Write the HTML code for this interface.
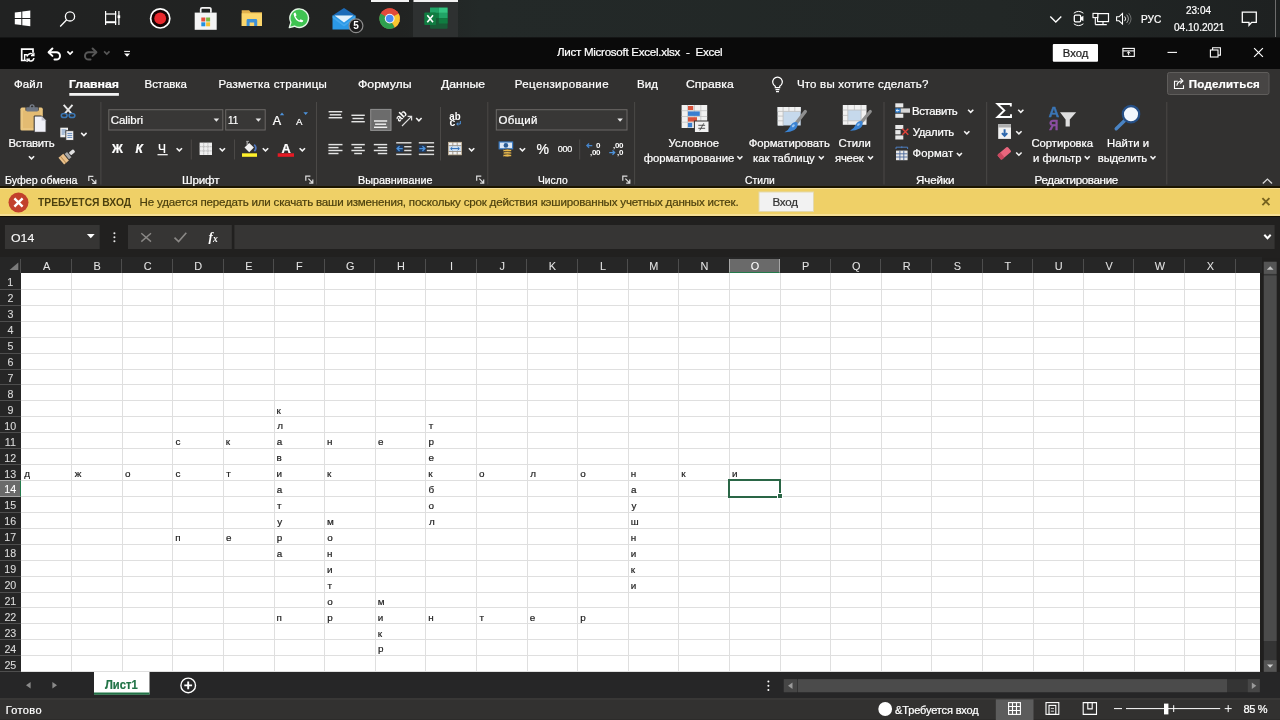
<!DOCTYPE html>
<html><head><meta charset="utf-8"><title>Excel</title>
<style>
*{box-sizing:border-box;margin:0;padding:0}
html,body{width:1280px;height:720px;overflow:hidden;background:#201f1e;font-family:"Liberation Sans",sans-serif;color:#fff}
body{position:relative}
#taskbar{position:absolute;left:0;top:0;width:1280px;height:38px;background:linear-gradient(90deg,#212222 0,#212322 400px,#232928 480px,#222726 1000px,#1e2121 1280px);border-bottom:1px solid #141515}
#titlebar{position:absolute;left:0;top:38px;width:1280px;height:31px;background:#0a0a0a}
#tabs{position:absolute;left:0;top:69px;width:1280px;height:29px;background:#323130}
#ribbon{position:absolute;left:0;top:98px;width:1280px;height:88px;background:#323130}
#msgbar{position:absolute;left:0;top:186px;width:1280px;height:31px;background:linear-gradient(180deg,#1c1500 0,#1c1500 1.5px,#f6e09a 1.5px,#f6e09a 2.8px,#efd067 2.8px,#efd067 28px,#f5de93 28px,#f5de93 29.5px,#150f00 29.5px,#150f00 31px)}
#fbar{position:absolute;left:0;top:217px;width:1280px;height:41px;background:#21201f}
#colhdr{position:absolute;left:0;width:1262px;background:#262626}
#rowhdr{position:absolute;left:0;background:#262626;overflow:hidden}
#grid{position:absolute;background:#fff;overflow:hidden}
#sheetbar{position:absolute;left:0;top:672.2px;width:1280px;height:26px;background:#262627}
#status{position:absolute;left:0;top:697.8px;width:1280px;height:22.2px;background:#323130;border-top:2px solid #383736;border-bottom:1px solid #2c2b2a}
#ov{position:absolute;left:0;top:0;will-change:transform}
#grid,#colhdr,#rowhdr{will-change:transform}
#texts{position:absolute;left:0;top:0;width:0;height:0;will-change:transform}
.t{position:absolute;white-space:pre;line-height:1;-webkit-text-stroke:.24px}
.cs{position:absolute;top:1.5px;width:1px;bottom:0;background:#4d4d4d}
.corner{position:absolute;left:0;top:0}
.vl{position:absolute;top:0;width:1px;height:100%;background:#dfdfdf}
.hl{position:absolute;left:0;height:1px;width:100%;background:#dfdfdf}
.selbox{position:absolute;border:2px solid #2a6646;box-sizing:content-box}
.handle{position:absolute;width:6px;height:6px;background:#2a6646;border:1px solid #fff;box-sizing:border-box}
.chsel{position:absolute;top:1.5px;bottom:0;background:#6a6a6a;border-bottom:1.5px solid #24794b;border-left:1px solid #a6a6a6;border-right:1px solid #a6a6a6}
.rs{position:absolute;left:0;width:100%;height:1px;background:#4e4e4e}
.rhsel{position:absolute;left:0;width:100%;background:#6a6a6a;border-right:1.5px solid #24794b;border-top:1px solid #a6a6a6;border-bottom:1px solid #a6a6a6}

</style></head><body>
<div id="taskbar"></div>
<div id="titlebar"></div>
<div id="tabs"></div>
<div id="ribbon">
</div>
<div id="msgbar">
</div>
<div id="fbar">
</div>
<div id="colhdr" style="top:257.0px;height:16.0px">
<svg class="corner" width="21" height="16" viewBox="0 0 21 16"><path d="M18.3 5.5V13H9.5z" fill="#7a7a7a"/></svg>
<i class="cs" style="left:20.10px"></i>
<i class="cs" style="left:70.70px"></i>
<i class="cs" style="left:121.30px"></i>
<i class="cs" style="left:171.90px"></i>
<i class="cs" style="left:222.50px"></i>
<i class="cs" style="left:273.10px"></i>
<i class="cs" style="left:323.70px"></i>
<i class="cs" style="left:374.30px"></i>
<i class="cs" style="left:424.90px"></i>
<i class="cs" style="left:475.50px"></i>
<i class="cs" style="left:526.10px"></i>
<i class="cs" style="left:576.70px"></i>
<i class="cs" style="left:627.30px"></i>
<i class="cs" style="left:677.90px"></i>
<i class="cs" style="left:728.50px"></i>
<i class="cs" style="left:779.10px"></i>
<i class="cs" style="left:829.70px"></i>
<i class="cs" style="left:880.30px"></i>
<i class="cs" style="left:930.90px"></i>
<i class="cs" style="left:981.50px"></i>
<i class="cs" style="left:1032.10px"></i>
<i class="cs" style="left:1082.70px"></i>
<i class="cs" style="left:1133.30px"></i>
<i class="cs" style="left:1183.90px"></i>
<i class="cs" style="left:1234.50px"></i>
<div class="chsel" style="left:728.50px;width:51.60px"></div>
</div>
<div id="rowhdr" style="top:273.0px;height:399.2px;width:20.6px">
<i class="rs" style="top:15.88px"></i>
<i class="rs" style="top:31.81px"></i>
<i class="rs" style="top:47.74px"></i>
<i class="rs" style="top:63.67px"></i>
<i class="rs" style="top:79.60px"></i>
<i class="rs" style="top:95.53px"></i>
<i class="rs" style="top:111.46px"></i>
<i class="rs" style="top:127.39px"></i>
<i class="rs" style="top:143.32px"></i>
<i class="rs" style="top:159.25px"></i>
<i class="rs" style="top:175.18px"></i>
<i class="rs" style="top:191.11px"></i>
<i class="rs" style="top:207.04px"></i>
<i class="rs" style="top:222.97px"></i>
<i class="rs" style="top:238.90px"></i>
<i class="rs" style="top:254.83px"></i>
<i class="rs" style="top:270.76px"></i>
<i class="rs" style="top:286.69px"></i>
<i class="rs" style="top:302.62px"></i>
<i class="rs" style="top:318.55px"></i>
<i class="rs" style="top:334.48px"></i>
<i class="rs" style="top:350.41px"></i>
<i class="rs" style="top:366.34px"></i>
<i class="rs" style="top:382.27px"></i>
<i class="rs" style="top:398.20px"></i>
<i class="rs" style="top:414.13px"></i>
<div class="rhsel" style="top:207.04px;height:16.93px"></div>
</div>
<div id="grid" style="left:20.6px;top:273.0px;width:1239.4px;height:399.2px">
<i class="vl" style="left:50.10px"></i>
<i class="vl" style="left:100.70px"></i>
<i class="vl" style="left:151.30px"></i>
<i class="vl" style="left:201.90px"></i>
<i class="vl" style="left:252.50px"></i>
<i class="vl" style="left:303.10px"></i>
<i class="vl" style="left:353.70px"></i>
<i class="vl" style="left:404.30px"></i>
<i class="vl" style="left:454.90px"></i>
<i class="vl" style="left:505.50px"></i>
<i class="vl" style="left:556.10px"></i>
<i class="vl" style="left:606.70px"></i>
<i class="vl" style="left:657.30px"></i>
<i class="vl" style="left:707.90px"></i>
<i class="vl" style="left:758.50px"></i>
<i class="vl" style="left:809.10px"></i>
<i class="vl" style="left:859.70px"></i>
<i class="vl" style="left:910.30px"></i>
<i class="vl" style="left:960.90px"></i>
<i class="vl" style="left:1011.50px"></i>
<i class="vl" style="left:1062.10px"></i>
<i class="vl" style="left:1112.70px"></i>
<i class="vl" style="left:1163.30px"></i>
<i class="vl" style="left:1213.90px"></i>
<i class="vl" style="left:1264.50px"></i>
<i class="hl" style="top:15.88px"></i>
<i class="hl" style="top:31.81px"></i>
<i class="hl" style="top:47.74px"></i>
<i class="hl" style="top:63.67px"></i>
<i class="hl" style="top:79.60px"></i>
<i class="hl" style="top:95.53px"></i>
<i class="hl" style="top:111.46px"></i>
<i class="hl" style="top:127.39px"></i>
<i class="hl" style="top:143.32px"></i>
<i class="hl" style="top:159.25px"></i>
<i class="hl" style="top:175.18px"></i>
<i class="hl" style="top:191.11px"></i>
<i class="hl" style="top:207.04px"></i>
<i class="hl" style="top:222.97px"></i>
<i class="hl" style="top:238.90px"></i>
<i class="hl" style="top:254.83px"></i>
<i class="hl" style="top:270.76px"></i>
<i class="hl" style="top:286.69px"></i>
<i class="hl" style="top:302.62px"></i>
<i class="hl" style="top:318.55px"></i>
<i class="hl" style="top:334.48px"></i>
<i class="hl" style="top:350.41px"></i>
<i class="hl" style="top:366.34px"></i>
<i class="hl" style="top:382.27px"></i>
<i class="hl" style="top:398.20px"></i>
<i class="hl" style="top:414.13px"></i>
<div class="selbox" style="left:706.9px;top:206.0px;width:49.6px;height:14.9px"></div>
<div class="handle" style="left:756.0px;top:220.1px"></div>
</div><div id="sheetbar">
</div>
<div id="status">
</div>
<svg id="ov" width="1280" height="720" viewBox="0 0 1280 720"><!-- ===== taskbar ===== -->
<rect x="413" y="0" width="45" height="37" fill="#2e3131"/>
<rect x="371" y="0" width="38" height="2" fill="#f2f2f2"/>
<rect x="413.5" y="0" width="44.5" height="2" fill="#f2f2f2"/>
<g fill="#fff">
<polygon points="14.8,12.6 21.3,11.7 21.3,17.9 14.8,17.9"/>
<polygon points="22.3,11.5 30.3,10.4 30.3,17.9 22.3,17.9"/>
<polygon points="14.8,18.9 21.3,18.9 21.3,25.1 14.8,24.2"/>
<polygon points="22.3,18.9 30.3,18.9 30.3,26.3 22.3,25.2"/>
</g>
<g fill="none" stroke="#fff" stroke-width="1.3">
<circle cx="70" cy="16.4" r="4.6"/><line x1="66.7" y1="19.8" x2="60.2" y2="26.5"/>
</g>
<g fill="none" stroke="#fff" stroke-width="1.2">
<path d="M105.6 11V25M115.6 11V25M118.9 11V25"/>
<path d="M105 14H116.2" stroke-width="1.3"/><path d="M105 22.2H116.2" stroke-width="2"/>
<rect x="117.6" y="15.3" width="2.6" height="2.8" fill="#fff" stroke="none"/>
</g>
<circle cx="160.2" cy="18.4" r="9.6" fill="#160303" stroke="#fff" stroke-width="1.7"/>
<circle cx="160.2" cy="18.4" r="5.9" fill="#e9282d"/>
<!-- store -->
<path d="M200.7 12.8V9.2a1.4 1.4 0 0 1 1.4-1.4h7.4a1.4 1.4 0 0 1 1.4 1.4v3.6" fill="none" stroke="#f3f3f3" stroke-width="1.7"/>
<rect x="194.7" y="12.6" width="22" height="17.2" fill="#f4f4f4"/>
<rect x="201.3" y="17.5" width="4" height="4" fill="#e5503c"/><rect x="206.1" y="17.5" width="4" height="4" fill="#7eb83f"/>
<rect x="201.3" y="22.3" width="4" height="4" fill="#2391e0"/><rect x="206.1" y="22.3" width="4" height="4" fill="#f6c130"/>
<!-- folder -->
<path d="M241.7 10.3h7.3l1.8 1.9h11.2v13.8h-20.3z" fill="#e2b14c"/>
<rect x="241.7" y="13.3" width="20.3" height="12.7" fill="#fbd66c"/>
<path d="M246.6 26v-5.6a1.4 1.4 0 0 1 1.4-1.4h7.8a1.4 1.4 0 0 1 1.4 1.4v5.6h-3v-3.6h-4.6v3.6z" fill="#3d90d8"/>
<!-- whatsapp -->
<path d="M289.3 27.6l1.6-5.2a9.3 9.3 0 1 1 3.6 3.8z" fill="#3fc451" stroke="#e6f7e8" stroke-width="1.4" stroke-linejoin="round"/>
<path d="M293.6 14.3q.1-1.7 1.8-1.7l1.2 2.7-1.1 1.3q1.3 2.5 3.8 3.8l1.3-1.1 2.7 1.2q0 1.7-1.7 1.8-6.9-.9-8-8z" fill="#fff"/>
<!-- mail -->
<polygon points="332.5,15.6 344,8 355.5,15.6" fill="#1c6bb8"/>
<rect x="332.5" y="15.4" width="23" height="14.1" fill="#2b98e6"/>
<polygon points="334.6,15.4 353.4,15.4 344,22.6" fill="#e3f1fb"/>
<path d="M332.5 15.6L344 24.5 355.5 15.6V18L344 26.5 332.5 18z" fill="#55b3f2" opacity=".6"/>
<circle cx="356" cy="25.7" r="6.9" fill="#1c1c1c" stroke="#8d8d8d" stroke-width="1.2"/>
<text x="356" y="29.3" font-size="10" font-weight="bold" fill="#fff" text-anchor="middle" font-family="Liberation Sans, sans-serif">5</text>
<!-- chrome -->
<g transform="translate(389.7,18.6)">
<circle r="10.3" fill="#e24a3b"/>
<path d="M0 0L-8.92 -5.15A10.3 10.3 0 0 0 0 10.3z" fill="#2fa04f" transform="rotate(0)"/>
<path d="M-8.92 -5.15A10.3 10.3 0 0 0 5.15 8.92L0 0z" fill="#2fa04f"/>
<path d="M5.15 8.92A10.3 10.3 0 0 0 8.92 -5.15L0 0z" fill="#f9c730"/>
<path d="M-4.2 -2.4L-8.92 -5.15A10.3 10.3 0 0 1 8.92 -5.15L0 -5.15z" fill="#e24a3b"/>
<circle r="4.9" fill="#f4f4f4"/><circle r="3.8" fill="#4a8bf5"/>
</g>
<!-- excel -->
<rect x="430" y="7.6" width="17.6" height="21.1" rx="1" fill="#185c37"/>
<rect x="430" y="7.6" width="8.8" height="5.3" fill="#21a366"/><rect x="438.8" y="7.6" width="8.8" height="5.3" fill="#33c481"/>
<rect x="430" y="12.9" width="8.8" height="5.3" fill="#107c41"/><rect x="438.8" y="12.9" width="8.8" height="5.3" fill="#21a366"/>
<rect x="430" y="18.2" width="8.8" height="5.3" fill="#185c37"/><rect x="438.8" y="18.2" width="8.8" height="5.3" fill="#107c41"/>
<rect x="424.3" y="12.6" width="11.7" height="12.4" rx="1" fill="#107c41"/>
<path d="M427.3 15.3L433 22.3M433 15.3L427.3 22.3" stroke="#fff" stroke-width="1.6" fill="none"/>
<!-- tray -->
<g fill="none" stroke="#fff" stroke-width="1.35">
<polyline points="1050.3,16.6 1055.8,22.1 1061.3,16.6"/>
<rect x="1074.3" y="15.2" width="6.4" height="6.6" rx="1.2" stroke-width="1.3"/>
<path d="M1080.7 17.6l2.7-1.9v5.6l-2.7-1.9z" fill="#fff" stroke="none"/>
<path d="M1073.8 13.2Q1078.6 9.6 1083.4 13.2M1073.8 23.8Q1078.6 27.4 1083.4 23.8" stroke-width="1"/>
<rect x="1097.6" y="13.6" width="10.9" height="8" stroke-width="1.2"/>
<path d="M1103 21.6V24.5M1095.3 24.6H1106.8M1095.3 24.6V17.6" stroke-width="1.1"/>
<rect x="1093" y="13.4" width="4.8" height="4.2" fill="#1c1c1c" stroke-width="1.1"/>
<path d="M1116.6 16.8h2.4l3.5-3.3v10.6l-3.5-3.3h-2.4z" stroke-width="1.1"/>
<path d="M1124.7 16.5q1.9 2.3 0 4.6" stroke-width="1"/>
<path d="M1126.7 14.7q3.4 4.1 0 8.2" stroke-width="1" opacity=".6"/>
<path d="M1128.7 13.1q4.7 5.7 0 11.4" stroke-width="1" opacity=".35"/>
<path d="M1242.3 12.2h14v10.2h-4.6l-2.7 2.9v-2.9h-6.7z" stroke-width="1.3"/>
</g>
<line x1="1275.5" y1="0" x2="1275.5" y2="37" stroke="#6d6d6d" stroke-width="1"/>
<!-- ===== title bar ===== -->
<g fill="none" stroke="#fff" stroke-width="1.7">
<path d="M26.3 60.5H21.7V49.2H33V52.8"/>
<path d="M24.6 60.5V54.7H27.3" stroke-width="1.4"/>
<path d="M27 56.5a3.6 3.6 0 0 1 6.4-1.5M34 58.1a3.6 3.6 0 0 1-6.4 1.5" stroke-width="1.6"/>
<path d="M33.9 52.7v2.9h-2.9M27.1 62.1v-2.9h2.9" stroke-width="1.3"/>
</g>
<g fill="none" stroke="#fff" stroke-width="2" stroke-linecap="round" stroke-linejoin="round">
<path d="M52.4 48.5L48.6 52.2 52.4 55.9"/><path d="M49 52.2h7.3a3.7 3.7 0 0 1 0 7.4h-1.8"/>
</g>
<g fill="none" stroke="#575757" stroke-width="2" stroke-linecap="round" stroke-linejoin="round">
<path d="M92.6 48.5L96.4 52.2 92.6 55.9"/><path d="M96 52.2h-7.3a3.7 3.7 0 0 0 0 7.4h1.8"/>
</g>
<polyline points="67.4,51.3 70.1,54 72.8,51.3" fill="none" stroke="#fff" stroke-width="1.7"/>
<polyline points="104.1,51.3 106.8,54 109.5,51.3" fill="none" stroke="#575757" stroke-width="1.7"/>
<path d="M124.2 51.4h5.8" stroke="#fff" stroke-width="1"/><polygon points="124.2,53.5 130,53.5 127.1,56.8" fill="#fff"/>
<rect x="1052.8" y="44" width="45.2" height="17.7" rx="1" fill="#fff"/>
<g fill="none" stroke="#fff" stroke-width="1.1">
<rect x="1122.9" y="48.4" width="11.4" height="8"/><path d="M1122.9 50.9h11.4"/>
<path d="M1128.6 55.3v-3.3M1126.9 53.4l1.7-1.6 1.7 1.6" stroke-width="1"/>
<path d="M1167.5 52.4h9.5"/>
<rect x="1210.4" y="50" width="7.6" height="7"/><path d="M1212.6 50v-2.2h7.8v7.3h-2.4"/>
<path d="M1254.1 48.1l8.8 8.8M1262.9 48.1l-8.8 8.8" stroke-width="1.2"/>
</g>
<!-- ===== tabs ===== -->
<rect x="69.3" y="93" width="49.6" height="2.8" fill="#f3f3f3"/>
<g fill="none" stroke="#fff" stroke-width="1.2">
<path d="M775.3 87.6v-1.4a4.8 4.8 0 1 1 4.4 0v1.4z"/><path d="M775.5 89.6h4M776 91.6h3" stroke-width="1.1"/>
</g>
<rect x="1167.5" y="72.5" width="101.5" height="22" rx="2" fill="#474544" stroke="#5f5d5b"/>
<g fill="none" stroke="#fff" stroke-width="1.1">
<path d="M1177.8 81.2h-3.3v7.3h9v-3.2"/><path d="M1176.9 85.8q.4-4.7 5.3-4.9"/><path d="M1180.2 78.3l2.7 2.6-2.7 2.6"/>
</g>
<line x1="100.9" y1="102" x2="100.9" y2="184.5" stroke="#4b4947" stroke-width="1"/>
<line x1="316.5" y1="102" x2="316.5" y2="184.5" stroke="#4b4947" stroke-width="1"/>
<line x1="487.8" y1="102" x2="487.8" y2="184.5" stroke="#4b4947" stroke-width="1"/>
<line x1="634.6" y1="102" x2="634.6" y2="184.5" stroke="#4b4947" stroke-width="1"/>
<line x1="884" y1="102" x2="884" y2="184.5" stroke="#4b4947" stroke-width="1"/>
<line x1="986.7" y1="102" x2="986.7" y2="184.5" stroke="#4b4947" stroke-width="1"/>
<line x1="1166.8" y1="102" x2="1166.8" y2="184.5" stroke="#4b4947" stroke-width="1"/>
<line x1="191.3" y1="139.5" x2="191.3" y2="159.5" stroke="#4b4947" stroke-width="1"/>
<line x1="234.5" y1="139.5" x2="234.5" y2="159.5" stroke="#4b4947" stroke-width="1"/>
<line x1="579.7" y1="139.5" x2="579.7" y2="159.5" stroke="#4b4947" stroke-width="1"/>
<line x1="440.5" y1="107" x2="440.5" y2="160.5" stroke="#4b4947" stroke-width="1"/>
<path d="M88.8 180.9V176.3H93.4M91.4 178.9L95.8 183.3M95.8 179.7V183.3H92.2" fill="none" stroke="#dedede" stroke-width="1.2"/>
<path d="M305.8 180.7V176.1H310.4M308.4 178.7L312.8 183.1M312.8 179.5V183.1H309.2" fill="none" stroke="#dedede" stroke-width="1.2"/>
<path d="M476.7 180.7V176.1H481.3M479.3 178.7L483.7 183.1M483.7 179.5V183.1H480.1" fill="none" stroke="#dedede" stroke-width="1.2"/>
<path d="M622.8 180.7V176.1H627.4M625.4 178.7L629.8 183.1M629.8 179.5V183.1H626.2" fill="none" stroke="#dedede" stroke-width="1.2"/>
<rect x="20.4" y="107.6" width="22.4" height="23" rx="1.6" fill="#eac680"/>
<rect x="23" y="110.5" width="17.2" height="17.6" fill="#e3bb72"/>
<rect x="25.4" y="107" width="13.4" height="3.6" fill="#3d3a36"/>
<circle cx="32.1" cy="106.7" r="1.9" fill="none" stroke="#79818d" stroke-width="1.3"/>
<rect x="26.2" y="107.3" width="11.9" height="4.1" rx=".8" fill="#6d7582"/>
<path d="M34.2 116h7.4l4.5 4.5v11.8h-11.9z" fill="#f0f1f8" stroke="#323130" stroke-width="1"/>
<path d="M41.6 116v4.5h4.5z" fill="#c4c6d0"/>
<polyline points="28.9,156.2 31.5,158.9 34.1,156.2" fill="none" stroke="#f4f4f4" stroke-width="1.55"/>
<path d="M63.7 104.8L71.2 113.4M72.5 104.8L65 113.4" stroke="#e8e8e8" stroke-width="1.9" fill="none"/>
<ellipse cx="64.2" cy="115.5" rx="2.9" ry="2.1" fill="none" stroke="#3b78b6" stroke-width="1.5"/><ellipse cx="72" cy="115.5" rx="2.9" ry="2.1" fill="none" stroke="#3b78b6" stroke-width="1.5"/>
<rect x="60.3" y="127.7" width="7.7" height="9.6" fill="#f1f1f1"/>
<path d="M61.6 130h4.8M61.6 132h4.8M61.6 134h3" stroke="#3d6fae" stroke-width=".8"/>
<rect x="65.8" y="130.7" width="8" height="9.7" fill="#f1f1f1" stroke="#323130" stroke-width=".9"/>
<path d="M67.4 133.4h4.8M67.4 135.4h4.8M67.4 137.4h4.8" stroke="#3d6fae" stroke-width=".8"/>
<polyline points="81.2,132.9 83.9,135.6 86.6,132.9" fill="none" stroke="#f4f4f4" stroke-width="1.55"/>
<g transform="rotate(-40 67.5 156)"><path d="M59.4 151.6h6.2v8.8h-6.2z" fill="#e9c08b"/><rect x="61.4" y="151.6" width="1" height="8.8" fill="#b98a4e"/><rect x="66.6" y="152.6" width="3.2" height="6.8" fill="#a8a8a8"/><rect x="70.6" y="154.2" width="5.6" height="3.6" rx="1" fill="#e0e0e0"/></g>
<rect x="108.8" y="109.7" width="114" height="20.3" fill="#383736" stroke="#6b6967" stroke-width="1"/>
<rect x="225.7" y="109.7" width="39.5" height="20.3" fill="#383736" stroke="#6b6967" stroke-width="1"/>
<polygon points="213.6,118.6 219.2,118.6 216.4,121.7" fill="#e6e6e6"/>
<polygon points="255.6,118.6 261.2,118.6 258.4,121.7" fill="#e6e6e6"/>
<polygon points="279.8,115.3 284.2,115.3 282,112.5" fill="#4d93dc"/>
<polygon points="303.4,112.3 308,112.3 305.7,115.1" fill="#4d93dc"/>
<line x1="157.5" y1="154.7" x2="167.7" y2="154.7" stroke="#fff" stroke-width="1.2"/>
<polyline points="176.6,148.2 179.3,150.9 182.0,148.2" fill="none" stroke="#f4f4f4" stroke-width="1.55"/>
<polyline points="219.6,148.2 222.3,150.9 225.0,148.2" fill="none" stroke="#f4f4f4" stroke-width="1.55"/>
<polyline points="262.8,148.2 265.5,150.9 268.2,148.2" fill="none" stroke="#f4f4f4" stroke-width="1.55"/>
<polyline points="299.6,148.2 302.3,150.9 305.0,148.2" fill="none" stroke="#f4f4f4" stroke-width="1.55"/>
<rect x="199.6" y="142.6" width="12.4" height="12.4" fill="#efefef"/>
<path d="M203.7 142.6v12.4M207.9 142.6v12.4M199.6 146.7h12.4M199.6 150.9h12.4" stroke="#8f8f8f" stroke-width=".8" stroke-dasharray="1 1"/>
<polygon points="249.2,142.9 253.9,147.6 249.2,152.3 244.5,147.6" fill="#f1f1f1"/>
<path d="M247.2 141.3v3.6" stroke="#a4a4a4" stroke-width="1.3"/><path d="M246.3 141.4h2.6" stroke="#a4a4a4" stroke-width="1.1"/>
<path d="M254.2 144.6q3.2 3.2 .2 6.6" fill="none" stroke="#4f78c2" stroke-width="1.7"/>
<rect x="242" y="153.3" width="15" height="3.5" fill="#fff12b"/>
<rect x="277.7" y="153.3" width="16.3" height="3.5" fill="#e51a24"/>
<line x1="328.6" y1="111.7" x2="342.2" y2="111.7" stroke="#e4e4e4" stroke-width="1.45"/>
<line x1="329.70000000000005" y1="114.8" x2="341.09999999999997" y2="114.8" stroke="#e4e4e4" stroke-width="1.45"/>
<line x1="328.6" y1="117.7" x2="342.2" y2="117.7" stroke="#e4e4e4" stroke-width="1.45"/>
<line x1="351.4" y1="115.3" x2="364.8" y2="115.3" stroke="#e4e4e4" stroke-width="1.45"/>
<line x1="352.5" y1="118.5" x2="363.7" y2="118.5" stroke="#e4e4e4" stroke-width="1.45"/>
<line x1="351.4" y1="121.7" x2="364.8" y2="121.7" stroke="#e4e4e4" stroke-width="1.45"/>
<rect x="370.7" y="109.4" width="20.3" height="21" fill="#6c6c6c" stroke="#919191" stroke-width="1"/>
<line x1="374" y1="121" x2="387.2" y2="121" stroke="#f0f0f0" stroke-width="1.45"/>
<line x1="375.1" y1="124.2" x2="386.09999999999997" y2="124.2" stroke="#f0f0f0" stroke-width="1.45"/>
<line x1="374" y1="127.3" x2="387.2" y2="127.3" stroke="#f0f0f0" stroke-width="1.45"/>
<text transform="translate(399.3,122.3) rotate(-45)" font-size="10" font-weight="bold" fill="#fff" font-family="Liberation Sans, sans-serif">ab</text>
<path d="M402 126L411.3 116.7M407.6 116.4h4v4" fill="none" stroke="#e0e0e0" stroke-width="1.2"/>
<polyline points="416.2,118.0 418.9,120.8 421.6,118.0" fill="none" stroke="#f4f4f4" stroke-width="1.55"/>
<line x1="328.4" y1="144.6" x2="342.5" y2="144.6" stroke="#e4e4e4" stroke-width="1.45"/>
<line x1="351.4" y1="144.6" x2="364.8" y2="144.6" stroke="#e4e4e4" stroke-width="1.45"/>
<line x1="373.8" y1="144.6" x2="387.2" y2="144.6" stroke="#e4e4e4" stroke-width="1.45"/>
<line x1="328.4" y1="147.6" x2="338.5" y2="147.6" stroke="#e4e4e4" stroke-width="1.45"/>
<line x1="354.2" y1="147.6" x2="362" y2="147.6" stroke="#e4e4e4" stroke-width="1.45"/>
<line x1="377.8" y1="147.6" x2="387.2" y2="147.6" stroke="#e4e4e4" stroke-width="1.45"/>
<line x1="328.4" y1="150.5" x2="342.5" y2="150.5" stroke="#e4e4e4" stroke-width="1.45"/>
<line x1="351.4" y1="150.5" x2="364.8" y2="150.5" stroke="#e4e4e4" stroke-width="1.45"/>
<line x1="373.8" y1="150.5" x2="387.2" y2="150.5" stroke="#e4e4e4" stroke-width="1.45"/>
<line x1="328.4" y1="153.5" x2="338.5" y2="153.5" stroke="#e4e4e4" stroke-width="1.45"/>
<line x1="354.2" y1="153.5" x2="362" y2="153.5" stroke="#e4e4e4" stroke-width="1.45"/>
<line x1="377.8" y1="153.5" x2="387.2" y2="153.5" stroke="#e4e4e4" stroke-width="1.45"/>
<line x1="396.2" y1="142.8" x2="411.5" y2="142.8" stroke="#dcdcdc" stroke-width="1.45"/><line x1="396.2" y1="154.4" x2="411.5" y2="154.4" stroke="#dcdcdc" stroke-width="1.45"/>
<line x1="404.2" y1="146.7" x2="411.5" y2="146.7" stroke="#dcdcdc" stroke-width="1.45"/><line x1="404.2" y1="150.5" x2="411.5" y2="150.5" stroke="#dcdcdc" stroke-width="1.45"/>
<rect x="396.2" y="145.2" width="7" height="6.8" fill="#1f3a5f"/>
<path d="M402.7 148.6H397.2M399.59999999999997 146.2L397.09999999999997 148.6L399.59999999999997 151" fill="none" stroke="#4d93dc" stroke-width="1.3"/>
<line x1="418.8" y1="142.8" x2="434.1" y2="142.8" stroke="#dcdcdc" stroke-width="1.45"/><line x1="418.8" y1="154.4" x2="434.1" y2="154.4" stroke="#dcdcdc" stroke-width="1.45"/>
<line x1="426.8" y1="146.7" x2="434.1" y2="146.7" stroke="#dcdcdc" stroke-width="1.45"/><line x1="426.8" y1="150.5" x2="434.1" y2="150.5" stroke="#dcdcdc" stroke-width="1.45"/>
<rect x="418.8" y="145.2" width="7" height="6.8" fill="#1f3a5f"/>
<path d="M419.3 148.6H424.8M422.40000000000003 146.2L424.90000000000003 148.6L422.40000000000003 151" fill="none" stroke="#4d93dc" stroke-width="1.3"/>
<text x="449.3" y="119.6" font-size="10.5" font-weight="bold" fill="#fff" font-family="Liberation Sans, sans-serif" textLength="11.3" lengthAdjust="spacingAndGlyphs">ab</text>
<text x="449.5" y="126" font-size="10.5" font-weight="bold" fill="#fff" font-family="Liberation Sans, sans-serif">c</text>
<path d="M460.3 121v3h-3.5M458.3 122.5l-1.6 1.5 1.6 1.5" fill="none" stroke="#4d93dc" stroke-width="1"/>
<rect x="448.5" y="142.3" width="13" height="12.5" fill="#f1f1f1" stroke="#c9b79c" stroke-width=".8"/>
<rect x="449" y="145.6" width="12" height="5.9" fill="#cfe1f4"/>
<path d="M448.5 145.6h13M448.5 151.5h13M452.8 142.3v3.3M457.2 142.3v3.3M452.8 151.5v3.3M457.2 151.5v3.3" stroke="#8f8577" stroke-width=".8"/>
<path d="M450.8 148.6h8.4M452.3 147.1l-1.6 1.5 1.6 1.5M457.7 147.1l1.6 1.5-1.6 1.5" fill="none" stroke="#2a6cb5" stroke-width="1"/>
<polyline points="468.9,148.2 471.6,150.9 474.3,148.2" fill="none" stroke="#f4f4f4" stroke-width="1.55"/>
<rect x="496.3" y="109.7" width="130.7" height="20.3" fill="#383736" stroke="#6b6967" stroke-width="1"/>
<polygon points="617.3,118.6 622.9,118.6 620.1,121.7" fill="#e6e6e6"/>
<rect x="499.2" y="142" width="13.4" height="6.8" fill="#dce8f6" stroke="#3d7cc4" stroke-width="1.2"/>
<circle cx="505.9" cy="145.4" r="2.3" fill="#2b5c94"/>
<ellipse cx="507.3" cy="150.6" rx="4.3" ry="1.5" fill="#e9ba4e" stroke="#323130" stroke-width=".7"/>
<ellipse cx="507.3" cy="153" rx="4.3" ry="1.5" fill="#e9ba4e" stroke="#323130" stroke-width=".7"/>
<ellipse cx="507.3" cy="155.4" rx="4.3" ry="1.5" fill="#e9ba4e" stroke="#323130" stroke-width=".7"/>
<polyline points="519.7,148.2 522.4,150.9 525.1,148.2" fill="none" stroke="#f4f4f4" stroke-width="1.55"/>
<text x="600.1999999999999" y="148.4" font-size="8" text-anchor="end" letter-spacing="-.3" font-family="Liberation Sans, sans-serif" font-weight="bold" fill="#fff">0</text>
<text x="600.1999999999999" y="155.2" font-size="8" text-anchor="end" letter-spacing="-.3" font-family="Liberation Sans, sans-serif" font-weight="bold" fill="#fff">,00</text>
<path d="M592.3 145.6H586.9M589.0999999999999 143.5L586.9 145.6L589.0999999999999 147.7" fill="none" stroke="#4585cc" stroke-width="1.3"/>
<text x="623.1999999999999" y="148.4" font-size="8" text-anchor="end" letter-spacing="-.3" font-family="Liberation Sans, sans-serif" font-weight="bold" fill="#fff">,00</text>
<text x="623.1999999999999" y="155.2" font-size="8" text-anchor="end" letter-spacing="-.3" font-family="Liberation Sans, sans-serif" font-weight="bold" fill="#fff">,0</text>
<path d="M609.3 152.6H614.6999999999999M612.5 150.5L614.6999999999999 152.6L612.5 154.7" fill="none" stroke="#4d93dc" stroke-width="1.2"/>
<rect x="681.6" y="105" width="25.6" height="23" fill="#f1f1f1"/>
<path d="M687.6 105v23M694.4 105v23M700.8 105v23M681.6 110.7h25.6M681.6 116.5h25.6M681.6 122.2h25.6" stroke="#c2c2c2" stroke-width=".8"/>
<rect x="688" y="106" width="5.2" height="4" fill="#d9533c"/><rect x="688" y="111.4" width="11.8" height="4.5" fill="#3a7fd0"/>
<rect x="688" y="117.2" width="9" height="4.4" fill="#d9533c"/><rect x="688" y="122.9" width="4.2" height="4.4" fill="#3a7fd0"/>
<rect x="694.4" y="121" width="14.6" height="11.5" fill="#f1f1f1" stroke="#323130" stroke-width="1"/>
<path d="M698.3 125.3h6.8M698.3 128.3h6.8M703.8 123.3l-4 7" stroke="#444" stroke-width=".9" fill="none"/>
<polyline points="737.4,156.2 739.9,158.8 742.4,156.2" fill="none" stroke="#f4f4f4" stroke-width="1.55"/>
<rect x="777.7" y="107" width="23" height="18.5" fill="#c6d9ec"/>
<rect x="777.7" y="107" width="23" height="4.4" fill="#f1f1f1"/><rect x="777.7" y="107" width="5.4" height="18.5" fill="#f1f1f1"/>
<path d="M783.1 107v18.5M788.9 107v4.4M794.8 107v4.4M777.7 111.4h23M777.7 116.1h5.4M777.7 120.8h5.4" stroke="#bdbdbd" stroke-width=".8"/>
<path d="M805.3 111.5L796.2 123.3" stroke="#8e8e8e" stroke-width="3.4" stroke-linecap="round"/>
<path d="M797.2 122.2q1.8 4.5-2.8 7.8q-5 2.6-10 2.3q4.4-2.3 6-6.3q2.3-4.7 6.8-3.8z" fill="#3a83d3"/>
<ellipse cx="793.3" cy="125.8" rx="1.7" ry="1.1" fill="#9cc5f0" transform="rotate(-40 793.3 125.8)"/>
<polyline points="818.8,156.2 821.3,158.8 823.8,156.2" fill="none" stroke="#f4f4f4" stroke-width="1.55"/>
<rect x="842.8" y="105" width="23.7" height="19.8" fill="#f1f1f1"/>
<rect x="847.8" y="110" width="13.3" height="10.8" fill="#c6d9ec"/>
<path d="M847.8 105v19.8M861.1 105v19.8M842.8 110h23.7M842.8 120.8h23.7M854.4 105v5M842.8 115.4h5" stroke="#bdbdbd" stroke-width=".8"/>
<path d="M870.3 111.5L861.3 122.3" stroke="#8e8e8e" stroke-width="3.2" stroke-linecap="round"/>
<path d="M862.2 121.2q1.8 4.3-2.6 7.4q-4.8 2.5-9.6 2.2q4.2-2.2 5.7-6q2.2-4.5 6.5-3.6z" fill="#3a83d3"/>
<ellipse cx="858.5" cy="124.6" rx="1.6" ry="1" fill="#9cc5f0" transform="rotate(-40 858.5 124.6)"/>
<polyline points="868.0,156.2 870.5,158.8 873.0,156.2" fill="none" stroke="#f4f4f4" stroke-width="1.55"/>
<rect x="895.3" y="103.3" width="8" height="4.1" fill="#e8e8e8"/><rect x="895.3" y="113.7" width="8" height="4.1" fill="#e8e8e8"/>
<rect x="900.5" y="108.4" width="9.5" height="4.3" fill="#d4d4d4"/><rect x="895.3" y="108.4" width="5.2" height="4.3" fill="#2f80d3"/>
<path d="M899.3 110.5h-3M897.6 109.2l-1.4 1.3 1.4 1.3" stroke="#fff" stroke-width=".8" fill="none"/>
<rect x="895.3" y="125" width="8" height="4.1" fill="#e8e8e8"/><rect x="895.3" y="135.4" width="8" height="4.1" fill="#e8e8e8"/><rect x="895.3" y="130.1" width="5.3" height="4.3" fill="#e8e8e8"/>
<path d="M902.3 128.7l6 6M908.3 128.7l-6 6" stroke="#e0433a" stroke-width="1.4"/>
<path d="M896 149v-1.8h11.6v1.8M901.8 146.3v1.8" stroke="#4d7fc0" stroke-width="1" fill="none"/>
<rect x="896" y="150.6" width="11.6" height="9.6" fill="#e8e8e8"/>
<path d="M899.9 150.6v9.6M903.8 150.6v9.6M896 153.8h11.6M896 157h11.6" stroke="#4a689a" stroke-width=".9"/>
<polyline points="968.1,109.7 970.7,112.4 973.3,109.7" fill="none" stroke="#f4f4f4" stroke-width="1.55"/>
<polyline points="964.2,131.2 966.8,133.9 969.4,131.2" fill="none" stroke="#f4f4f4" stroke-width="1.55"/>
<polyline points="956.9,153.0 959.4,155.6 961.9,153.0" fill="none" stroke="#f4f4f4" stroke-width="1.55"/>
<path d="M1010.8 106.6V104H997.5L1004.3 110.5 997.5 117H1011V114.3" fill="none" stroke="#fff" stroke-width="1.9"/>
<polyline points="1018.2,109.7 1020.8,112.4 1023.4,109.7" fill="none" stroke="#f4f4f4" stroke-width="1.55"/>
<rect x="998.2" y="124.2" width="12.8" height="14.7" fill="#f1f1f1"/><rect x="998.2" y="124.2" width="12.8" height="3.3" fill="#adadad"/>
<path d="M1004.6 129.3v6.3M1001.9 133.1l2.7 2.7 2.7-2.7" fill="none" stroke="#2f68ad" stroke-width="2"/>
<polyline points="1016.2,131.2 1018.9,133.9 1021.6,131.2" fill="none" stroke="#f4f4f4" stroke-width="1.55"/>
<g transform="rotate(-40 1004.3 153.2)"><rect x="997.6" y="150" width="13.4" height="6.5" rx="1.3" fill="#e9667d"/><rect x="997.6" y="150" width="4.2" height="6.5" rx="1.3" fill="#c9485f"/></g>
<polyline points="1016.2,152.5 1018.9,155.2 1021.6,152.5" fill="none" stroke="#f4f4f4" stroke-width="1.55"/>
<text x="1048.6" y="116.7" font-size="14" fill="#3b76b6" stroke="#3b76b6" stroke-width=".3" font-family="Liberation Sans, sans-serif" font-weight="bold" textLength="10.8" lengthAdjust="spacingAndGlyphs">А</text>
<text x="1048.9" y="130" font-size="14" fill="#8b4ea2" stroke="#8b4ea2" stroke-width=".3" font-family="Liberation Sans, sans-serif" font-weight="bold" textLength="9.4" lengthAdjust="spacingAndGlyphs">Я</text>
<polygon points="1060,112.3 1076.2,112.3 1069.8,119.4 1069.8,126.4 1065.6,126.4 1065.6,119.4" fill="#dedede"/>
<polyline points="1084.7,156.2 1087.2,158.8 1089.7,156.2" fill="none" stroke="#f4f4f4" stroke-width="1.55"/>
<path d="M1125 120.2L1116.2 128.8" stroke="#4a84c4" stroke-width="3.4" stroke-linecap="round"/>
<circle cx="1131" cy="114.2" r="8.2" fill="#f2f7fd" stroke="#254f86" stroke-width="2.3"/>
<polyline points="1150.5,156.2 1153.0,158.8 1155.5,156.2" fill="none" stroke="#f4f4f4" stroke-width="1.55"/>
<polyline points="1262.8,183.5 1267.4,179.1 1272,183.5" fill="none" stroke="#d6d6d6" stroke-width="1.4"/><!-- message bar -->
<circle cx="18.5" cy="202.5" r="10" fill="#c2412c"/>
<path d="M14.4 198.4l8.2 8.2M22.6 198.4l-8.2 8.2" stroke="#fff" stroke-width="2.4"/>
<rect x="759" y="192" width="54.5" height="19.5" fill="#f2f2f2" stroke="#e3d9b0" stroke-width="1"/>
<path d="M1262.4 198.1l7 7M1269.4 198.1l-7 7" stroke="#77621f" stroke-width="1.9"/>
<!-- formula bar -->
<rect x="4.9" y="225" width="94.8" height="24" fill="#363534"/>
<polygon points="86.9,234 94.7,234 90.8,238.3" fill="#fff"/>
<circle cx="114.4" cy="233.2" r="1.05" fill="#e6e6e6"/><circle cx="114.4" cy="237.25" r="1.05" fill="#e6e6e6"/><circle cx="114.4" cy="241.3" r="1.05" fill="#e6e6e6"/>
<rect x="128" y="225" width="103.8" height="24" fill="#363534"/>
<path d="M141.3 233.3l9.7 8.3M151 233.3l-9.7 8.3" stroke="#8a8886" stroke-width="1.4"/>
<polyline points="174.5,237.6 178.6,241.6 186.3,232.8" fill="none" stroke="#8a8886" stroke-width="1.6"/>
<text x="208.4" y="241.3" font-size="13" font-style="italic" font-weight="bold" fill="#fff" font-family="Liberation Serif, serif">f</text>
<text x="213" y="242.3" font-size="9.5" font-style="italic" font-weight="bold" fill="#fff" font-family="Liberation Serif, serif">x</text>
<rect x="234.4" y="225" width="1040.2" height="24" fill="#363534"/>
<polyline points="1264.3,234.8 1267.5,238.2 1270.7,234.8" fill="none" stroke="#fff" stroke-width="2"/>
<!-- v scroll -->
<rect x="1263.8" y="262" width="12.8" height="410" fill="#343434"/>
<rect x="1263.8" y="261.7" width="12.8" height="12.2" fill="#555"/>
<polygon points="1266.8,269.8 1273.6,269.8 1270.2,266.2" fill="#c4c4c4"/>
<rect x="1263.8" y="275.5" width="12.8" height="365.5" fill="#4b4b4b"/>
<rect x="1263.8" y="660.2" width="12.8" height="11.6" fill="#555"/>
<polygon points="1267,664.4 1273.2,664.4 1270.1,667.8" fill="#d0d0d0"/>
<!-- sheet bar -->
<polygon points="30.6,682 30.6,688.6 26,685.3" fill="#8a8a8a"/>
<polygon points="52.4,682 52.4,688.6 57,685.3" fill="#8a8a8a"/>
<rect x="94" y="672" width="55.5" height="22.5" fill="#fff"/>
<rect x="94" y="692.5" width="55.5" height="2.2" fill="#217346"/>
<circle cx="188.2" cy="685.4" r="7.3" fill="none" stroke="#fff" stroke-width="1.4"/>
<path d="M184.3 685.4h7.8M188.2 681.5v7.8" stroke="#fff" stroke-width="1.9"/>
<circle cx="768.4" cy="681.6" r="1" fill="#fff"/><circle cx="768.4" cy="685.8" r="1" fill="#fff"/><circle cx="768.4" cy="690" r="1" fill="#fff"/>
<rect x="783.8" y="679.2" width="476" height="13" fill="#343434"/>
<rect x="783.8" y="679.2" width="13.2" height="13" fill="#464646"/>
<polygon points="792.5,682.4 792.5,689 788,685.7" fill="#9a9a9a"/>
<rect x="798" y="679.2" width="429" height="13" fill="#4b4b4b"/>
<rect x="1247.8" y="679.2" width="12" height="13" fill="#464646"/>
<polygon points="1251.8,682.4 1251.8,689 1256.3,685.7" fill="#9a9a9a"/>
<!-- status bar -->
<circle cx="885.2" cy="709" r="6.9" fill="#fff"/>
<rect x="995.8" y="699.3" width="37.7" height="20.7" fill="#5c5c5c"/>
<g fill="none" stroke="#fff" stroke-width="1.1">
<rect x="1008.6" y="702.6" width="11.8" height="11.8"/><path d="M1012.5 702.6v11.8M1016.5 702.6v11.8M1008.6 706.5h11.8M1008.6 710.5h11.8"/>
<rect x="1046" y="702.6" width="12.8" height="11.8"/><rect x="1049" y="705.4" width="6.8" height="9"/><path d="M1050.8 708.4h3.2M1050.8 711.2h3.2" stroke-width=".8"/>
<path d="M1083.2 702.6v11.8h13.3v-11.8z"/><path d="M1087.8 702.6v6.3h4.4v-6.3" stroke-width="1.1"/>
<path d="M1114 708.6h8M1126 708.6h94.2" stroke-width="1"/><path d="M1224.7 708.6h7M1228.2 705.1v7" stroke-width="1"/>
<path d="M1173.7 705.2v6.8" stroke-width="1"/>
</g>
<rect x="1164" y="703.6" width="4.4" height="10.8" fill="#fff"/>
</svg><div id="texts"><span class="t" style="left:1141.1px;top:14px;font-size:11.3px;color:#fff;transform:scaleX(0.894);transform-origin:0 0">РУС</span>
<span class="t" style="left:1186.3px;top:5px;font-size:11.3px;color:#fff;transform:scaleX(0.884);transform-origin:0 0">23:04</span>
<span class="t" style="left:1173.6px;top:22px;font-size:11.3px;color:#fff;transform:scaleX(0.892);transform-origin:0 0">04.10.2021</span>
<span class="t" style="left:556.9px;top:46px;font-size:11.6px;color:#fff;letter-spacing:-0.28px">Лист Microsoft Excel.xlsx  -  Excel</span>
<span class="t" style="left:1062.8px;top:48px;font-size:11.3px;color:#222;letter-spacing:-0.03px">Вход</span>
<span class="t" style="left:13.9px;top:79px;font-size:11.5px;color:#fff;letter-spacing:0.15px">Файл</span>
<span class="t" style="left:68.8px;top:79px;font-size:11.5px;font-weight:bold;color:#fff;transform:scaleX(1.07);transform-origin:0 0">Главная</span>
<span class="t" style="left:144.5px;top:79px;font-size:11.5px;color:#fff;letter-spacing:-0.04px">Вставка</span>
<span class="t" style="left:218.5px;top:79px;font-size:11.5px;color:#fff;letter-spacing:0.25px">Разметка страницы</span>
<span class="t" style="left:358.2px;top:79px;font-size:11.5px;color:#fff;transform:scaleX(1.072);transform-origin:0 0">Формулы</span>
<span class="t" style="left:440.5px;top:79px;font-size:11.5px;color:#fff;transform:scaleX(1.061);transform-origin:0 0">Данные</span>
<span class="t" style="left:514.7px;top:79px;font-size:11.5px;color:#fff;letter-spacing:0.39px">Рецензирование</span>
<span class="t" style="left:637.0px;top:79px;font-size:11.5px;color:#fff;letter-spacing:0.12px">Вид</span>
<span class="t" style="left:685.5px;top:79px;font-size:11.5px;color:#fff;transform:scaleX(1.056);transform-origin:0 0">Справка</span>
<span class="t" style="left:796.9px;top:79px;font-size:11.5px;color:#fff;letter-spacing:0.21px">Что вы хотите сделать?</span>
<span class="t" style="left:1188.8px;top:79px;font-size:11.5px;font-weight:bold;color:#fff;letter-spacing:0.22px">Поделиться</span>
<span class="t" style="left:8.6px;top:138px;font-size:11.3px;color:#fff;letter-spacing:-0.26px">Вставить</span>
<span class="t" style="left:4.8px;top:174px;font-size:11.6px;color:#fff;transform:scaleX(0.921);transform-origin:0 0">Буфер обмена</span>
<span class="t" style="left:110.7px;top:115px;font-size:11.5px;color:#fff;letter-spacing:-0.05px">Calibri</span>
<span class="t" style="left:228.2px;top:115px;font-size:11.5px;color:#fff;transform:scaleX(0.856);transform-origin:0 0">11</span>
<span class="t" style="left:112.0px;top:143px;font-size:12px;font-weight:bold;color:#fff;letter-spacing:0.00px">Ж</span>
<span class="t" style="left:135.6px;top:143px;font-size:12px;font-weight:bold;font-style:italic;color:#fff;letter-spacing:0.00px">К</span>
<span class="t" style="left:158.0px;top:143px;font-size:12px;color:#fff;letter-spacing:0.00px">Ч</span>
<span class="t" style="left:272.8px;top:115px;font-size:12.6px;color:#fff;letter-spacing:0.00px">A</span>
<span class="t" style="left:296.0px;top:117px;font-size:9.6px;color:#fff;letter-spacing:0.00px">A</span>
<span class="t" style="left:281.6px;top:143px;font-size:12.8px;font-weight:bold;color:#fff;letter-spacing:0.00px">A</span>
<span class="t" style="left:182.0px;top:174px;font-size:11.6px;color:#fff;letter-spacing:-0.15px">Шрифт</span>
<span class="t" style="left:357.6px;top:174px;font-size:11.6px;color:#fff;transform:scaleX(0.933);transform-origin:0 0">Выравнивание</span>
<span class="t" style="left:498.5px;top:115px;font-size:11.5px;color:#fff;letter-spacing:0.25px">Общий</span>
<span class="t" style="left:536.5px;top:142px;font-size:14px;color:#fff;letter-spacing:0.00px">%</span>
<span class="t" style="left:557.8px;top:145px;font-size:9px;color:#fff;letter-spacing:-0.25px">000</span>
<span class="t" style="left:538.1px;top:174px;font-size:11.6px;color:#fff;transform:scaleX(0.888);transform-origin:0 0">Число</span>
<span class="t" style="left:668.6px;top:138px;font-size:11.3px;color:#fff;letter-spacing:0.08px">Условное</span>
<span class="t" style="left:643.7px;top:153px;font-size:11.3px;color:#fff;letter-spacing:0.00px">форматирование</span>
<span class="t" style="left:748.7px;top:138px;font-size:11.3px;color:#fff;letter-spacing:-0.07px">Форматировать</span>
<span class="t" style="left:753.0px;top:153px;font-size:11.3px;color:#fff;letter-spacing:-0.01px">как таблицу</span>
<span class="t" style="left:838.5px;top:138px;font-size:11.3px;color:#fff;letter-spacing:-0.06px">Стили</span>
<span class="t" style="left:835.0px;top:153px;font-size:11.3px;color:#fff;letter-spacing:-0.19px">ячеек</span>
<span class="t" style="left:744.5px;top:174px;font-size:11.6px;color:#fff;transform:scaleX(0.887);transform-origin:0 0">Стили</span>
<span class="t" style="left:912.0px;top:106px;font-size:11.3px;color:#fff;letter-spacing:-0.31px">Вставить</span>
<span class="t" style="left:912.8px;top:127px;font-size:11.3px;color:#fff;letter-spacing:-0.28px">Удалить</span>
<span class="t" style="left:912.5px;top:148px;font-size:11.3px;color:#fff;letter-spacing:0.10px">Формат</span>
<span class="t" style="left:915.9px;top:174px;font-size:11.6px;color:#fff;letter-spacing:-0.07px">Ячейки</span>
<span class="t" style="left:1031.5px;top:138px;font-size:11.3px;color:#fff;letter-spacing:-0.06px">Сортировка</span>
<span class="t" style="left:1033.0px;top:153px;font-size:11.3px;color:#fff;letter-spacing:0.07px">и фильтр</span>
<span class="t" style="left:1107.0px;top:138px;font-size:11.3px;color:#fff;letter-spacing:0.07px">Найти и</span>
<span class="t" style="left:1097.8px;top:153px;font-size:11.3px;color:#fff;letter-spacing:-0.16px">выделить</span>
<span class="t" style="left:1034.6px;top:174px;font-size:11.6px;color:#fff;letter-spacing:-0.36px">Редактирование</span>
<span class="t" style="left:38.0px;top:197px;font-size:11.8px;font-weight:bold;color:#4c400e;-webkit-text-stroke:0;transform:scaleX(0.871);transform-origin:0 0">ТРЕБУЕТСЯ ВХОД</span>
<span class="t" style="left:139.6px;top:196px;font-size:11.6px;color:#4c400e;-webkit-text-stroke:.2px;letter-spacing:-0.21px">Не удается передать или скачать ваши изменения, поскольку срок действия кэшированных учетных данных истек.</span>
<span class="t" style="left:772.5px;top:196px;font-size:11.6px;color:#333;letter-spacing:-0.23px">Вход</span>
<span class="t" style="left:11.0px;top:233px;font-size:11.8px;color:#fff;-webkit-text-stroke:.1px;transform:scaleX(1.042);transform-origin:0 0">O14</span>
<span class="t" style="left:105.2px;top:679px;font-size:12.3px;font-weight:bold;color:#217346;transform:scaleX(0.91);transform-origin:0 0">Лист1</span>
<span class="t" style="left:5.8px;top:705px;font-size:11px;color:#fff;letter-spacing:0.35px">Готово</span>
<span class="t" style="left:895.0px;top:705px;font-size:11px;color:#fff;letter-spacing:-0.14px">&amp;Требуется вход</span>
<span class="t" style="left:1243.5px;top:704px;font-size:11px;color:#fff;letter-spacing:-0.35px">85 %</span>
<span class="t" style="left:43.0px;top:261px;font-size:10.9px;color:#e4e4e4;-webkit-text-stroke:.05px">A</span>
<span class="t" style="left:93.5px;top:261px;font-size:10.9px;color:#e4e4e4;-webkit-text-stroke:.05px">B</span>
<span class="t" style="left:143.8px;top:261px;font-size:10.9px;color:#e4e4e4;-webkit-text-stroke:.05px">C</span>
<span class="t" style="left:194.3px;top:261px;font-size:10.9px;color:#e4e4e4;-webkit-text-stroke:.05px">D</span>
<span class="t" style="left:245.2px;top:261px;font-size:10.9px;color:#e4e4e4;-webkit-text-stroke:.05px">E</span>
<span class="t" style="left:296.1px;top:261px;font-size:10.9px;color:#e4e4e4;-webkit-text-stroke:.05px">F</span>
<span class="t" style="left:346.1px;top:261px;font-size:10.9px;color:#e4e4e4;-webkit-text-stroke:.05px">G</span>
<span class="t" style="left:396.9px;top:261px;font-size:10.9px;color:#e4e4e4;-webkit-text-stroke:.05px">H</span>
<span class="t" style="left:449.9px;top:261px;font-size:10.9px;color:#e4e4e4;-webkit-text-stroke:.05px">I</span>
<span class="t" style="left:499.5px;top:261px;font-size:10.9px;color:#e4e4e4;-webkit-text-stroke:.05px">J</span>
<span class="t" style="left:548.7px;top:261px;font-size:10.9px;color:#e4e4e4;-webkit-text-stroke:.05px">K</span>
<span class="t" style="left:600.0px;top:261px;font-size:10.9px;color:#e4e4e4;-webkit-text-stroke:.05px">L</span>
<span class="t" style="left:649.3px;top:261px;font-size:10.9px;color:#e4e4e4;-webkit-text-stroke:.05px">M</span>
<span class="t" style="left:700.5px;top:261px;font-size:10.9px;color:#e4e4e4;-webkit-text-stroke:.05px">N</span>
<span class="t" style="left:750.8px;top:261px;font-size:10.9px;color:#fff;-webkit-text-stroke:.05px">O</span>
<span class="t" style="left:801.9px;top:261px;font-size:10.9px;color:#e4e4e4;-webkit-text-stroke:.05px">P</span>
<span class="t" style="left:852.0px;top:261px;font-size:10.9px;color:#e4e4e4;-webkit-text-stroke:.05px">Q</span>
<span class="t" style="left:902.8px;top:261px;font-size:10.9px;color:#e4e4e4;-webkit-text-stroke:.05px">R</span>
<span class="t" style="left:953.8px;top:261px;font-size:10.9px;color:#e4e4e4;-webkit-text-stroke:.05px">S</span>
<span class="t" style="left:1004.6px;top:261px;font-size:10.9px;color:#e4e4e4;-webkit-text-stroke:.05px">T</span>
<span class="t" style="left:1054.7px;top:261px;font-size:10.9px;color:#e4e4e4;-webkit-text-stroke:.05px">U</span>
<span class="t" style="left:1105.6px;top:261px;font-size:10.9px;color:#e4e4e4;-webkit-text-stroke:.05px">V</span>
<span class="t" style="left:1154.7px;top:261px;font-size:10.9px;color:#e4e4e4;-webkit-text-stroke:.05px">W</span>
<span class="t" style="left:1206.8px;top:261px;font-size:10.9px;color:#e4e4e4;-webkit-text-stroke:.05px">X</span>
<span class="t" style="left:7.3px;top:277px;font-size:10.7px;color:#dadada;-webkit-text-stroke:.1px">1</span>
<span class="t" style="left:7.4px;top:293px;font-size:10.7px;color:#dadada;-webkit-text-stroke:.1px">2</span>
<span class="t" style="left:7.4px;top:309px;font-size:10.7px;color:#dadada;-webkit-text-stroke:.1px">3</span>
<span class="t" style="left:7.4px;top:325px;font-size:10.7px;color:#dadada;-webkit-text-stroke:.1px">4</span>
<span class="t" style="left:7.4px;top:341px;font-size:10.7px;color:#dadada;-webkit-text-stroke:.1px">5</span>
<span class="t" style="left:7.4px;top:357px;font-size:10.7px;color:#dadada;-webkit-text-stroke:.1px">6</span>
<span class="t" style="left:7.4px;top:373px;font-size:10.7px;color:#dadada;-webkit-text-stroke:.1px">7</span>
<span class="t" style="left:7.4px;top:389px;font-size:10.7px;color:#dadada;-webkit-text-stroke:.1px">8</span>
<span class="t" style="left:7.4px;top:405px;font-size:10.7px;color:#dadada;-webkit-text-stroke:.1px">9</span>
<span class="t" style="left:4.3px;top:421px;font-size:10.7px;color:#dadada;-webkit-text-stroke:.1px">10</span>
<span class="t" style="left:4.8px;top:437px;font-size:10.7px;color:#dadada;-webkit-text-stroke:.1px">11</span>
<span class="t" style="left:4.3px;top:453px;font-size:10.7px;color:#dadada;-webkit-text-stroke:.1px">12</span>
<span class="t" style="left:4.3px;top:469px;font-size:10.7px;color:#dadada;-webkit-text-stroke:.1px">13</span>
<span class="t" style="left:4.3px;top:484px;font-size:10.7px;color:#fff;-webkit-text-stroke:.1px">14</span>
<span class="t" style="left:4.3px;top:500px;font-size:10.7px;color:#dadada;-webkit-text-stroke:.1px">15</span>
<span class="t" style="left:4.3px;top:516px;font-size:10.7px;color:#dadada;-webkit-text-stroke:.1px">16</span>
<span class="t" style="left:4.3px;top:532px;font-size:10.7px;color:#dadada;-webkit-text-stroke:.1px">17</span>
<span class="t" style="left:4.3px;top:548px;font-size:10.7px;color:#dadada;-webkit-text-stroke:.1px">18</span>
<span class="t" style="left:4.3px;top:564px;font-size:10.7px;color:#dadada;-webkit-text-stroke:.1px">19</span>
<span class="t" style="left:4.4px;top:580px;font-size:10.7px;color:#dadada;-webkit-text-stroke:.1px">20</span>
<span class="t" style="left:4.4px;top:596px;font-size:10.7px;color:#dadada;-webkit-text-stroke:.1px">21</span>
<span class="t" style="left:4.4px;top:612px;font-size:10.7px;color:#dadada;-webkit-text-stroke:.1px">22</span>
<span class="t" style="left:4.4px;top:628px;font-size:10.7px;color:#dadada;-webkit-text-stroke:.1px">23</span>
<span class="t" style="left:4.4px;top:644px;font-size:10.7px;color:#dadada;-webkit-text-stroke:.1px">24</span>
<span class="t" style="left:4.4px;top:660px;font-size:10.7px;color:#dadada;-webkit-text-stroke:.1px">25</span>
<span class="t" style="left:276.5px;top:406px;font-size:9.9px;color:#1c1c1c;-webkit-text-stroke:.2px">к</span>
<span class="t" style="left:277.2px;top:421px;font-size:9.9px;color:#1c1c1c;-webkit-text-stroke:.2px">л</span>
<span class="t" style="left:175.5px;top:437px;font-size:9.9px;color:#1c1c1c;-webkit-text-stroke:.2px">с</span>
<span class="t" style="left:225.8px;top:437px;font-size:9.9px;color:#1c1c1c;-webkit-text-stroke:.2px">к</span>
<span class="t" style="left:276.7px;top:437px;font-size:9.9px;color:#1c1c1c;-webkit-text-stroke:.2px">а</span>
<span class="t" style="left:327.1px;top:437px;font-size:9.9px;color:#1c1c1c;-webkit-text-stroke:.2px">н</span>
<span class="t" style="left:377.9px;top:437px;font-size:9.9px;color:#1c1c1c;-webkit-text-stroke:.2px">е</span>
<span class="t" style="left:428.8px;top:421px;font-size:9.9px;color:#1c1c1c;-webkit-text-stroke:.2px">т</span>
<span class="t" style="left:428.5px;top:437px;font-size:9.9px;color:#1c1c1c;-webkit-text-stroke:.2px">р</span>
<span class="t" style="left:428.5px;top:453px;font-size:9.9px;color:#1c1c1c;-webkit-text-stroke:.2px">е</span>
<span class="t" style="left:276.5px;top:453px;font-size:9.9px;color:#1c1c1c;-webkit-text-stroke:.2px">в</span>
<span class="t" style="left:24.2px;top:469px;font-size:9.9px;color:#1c1c1c;-webkit-text-stroke:.2px">д</span>
<span class="t" style="left:74.8px;top:469px;font-size:9.9px;color:#1c1c1c;-webkit-text-stroke:.2px">ж</span>
<span class="t" style="left:124.9px;top:469px;font-size:9.9px;color:#1c1c1c;-webkit-text-stroke:.2px">о</span>
<span class="t" style="left:175.5px;top:469px;font-size:9.9px;color:#1c1c1c;-webkit-text-stroke:.2px">с</span>
<span class="t" style="left:226.3px;top:469px;font-size:9.9px;color:#1c1c1c;-webkit-text-stroke:.2px">т</span>
<span class="t" style="left:276.5px;top:469px;font-size:9.9px;color:#1c1c1c;-webkit-text-stroke:.2px">и</span>
<span class="t" style="left:327.1px;top:469px;font-size:9.9px;color:#1c1c1c;-webkit-text-stroke:.2px">к</span>
<span class="t" style="left:428.3px;top:469px;font-size:9.9px;color:#1c1c1c;-webkit-text-stroke:.2px">к</span>
<span class="t" style="left:479.1px;top:469px;font-size:9.9px;color:#1c1c1c;-webkit-text-stroke:.2px">о</span>
<span class="t" style="left:530.2px;top:469px;font-size:9.9px;color:#1c1c1c;-webkit-text-stroke:.2px">л</span>
<span class="t" style="left:580.3px;top:469px;font-size:9.9px;color:#1c1c1c;-webkit-text-stroke:.2px">о</span>
<span class="t" style="left:630.7px;top:469px;font-size:9.9px;color:#1c1c1c;-webkit-text-stroke:.2px">н</span>
<span class="t" style="left:681.3px;top:469px;font-size:9.9px;color:#1c1c1c;-webkit-text-stroke:.2px">к</span>
<span class="t" style="left:731.9px;top:469px;font-size:9.9px;color:#1c1c1c;-webkit-text-stroke:.2px">и</span>
<span class="t" style="left:276.7px;top:485px;font-size:9.9px;color:#1c1c1c;-webkit-text-stroke:.2px">а</span>
<span class="t" style="left:428.5px;top:485px;font-size:9.9px;color:#1c1c1c;-webkit-text-stroke:.2px">б</span>
<span class="t" style="left:630.9px;top:485px;font-size:9.9px;color:#1c1c1c;-webkit-text-stroke:.2px">а</span>
<span class="t" style="left:277.0px;top:501px;font-size:9.9px;color:#1c1c1c;-webkit-text-stroke:.2px">т</span>
<span class="t" style="left:428.5px;top:501px;font-size:9.9px;color:#1c1c1c;-webkit-text-stroke:.2px">о</span>
<span class="t" style="left:631.4px;top:501px;font-size:9.9px;color:#1c1c1c;-webkit-text-stroke:.2px">у</span>
<span class="t" style="left:277.2px;top:517px;font-size:9.9px;color:#1c1c1c;-webkit-text-stroke:.2px">у</span>
<span class="t" style="left:327.1px;top:517px;font-size:9.9px;color:#1c1c1c;-webkit-text-stroke:.2px">м</span>
<span class="t" style="left:429.0px;top:517px;font-size:9.9px;color:#1c1c1c;-webkit-text-stroke:.2px">л</span>
<span class="t" style="left:630.7px;top:517px;font-size:9.9px;color:#1c1c1c;-webkit-text-stroke:.2px">ш</span>
<span class="t" style="left:175.2px;top:533px;font-size:9.9px;color:#1c1c1c;-webkit-text-stroke:.2px">п</span>
<span class="t" style="left:226.1px;top:533px;font-size:9.9px;color:#1c1c1c;-webkit-text-stroke:.2px">е</span>
<span class="t" style="left:276.7px;top:533px;font-size:9.9px;color:#1c1c1c;-webkit-text-stroke:.2px">р</span>
<span class="t" style="left:327.3px;top:533px;font-size:9.9px;color:#1c1c1c;-webkit-text-stroke:.2px">о</span>
<span class="t" style="left:630.7px;top:533px;font-size:9.9px;color:#1c1c1c;-webkit-text-stroke:.2px">н</span>
<span class="t" style="left:276.7px;top:549px;font-size:9.9px;color:#1c1c1c;-webkit-text-stroke:.2px">а</span>
<span class="t" style="left:327.1px;top:549px;font-size:9.9px;color:#1c1c1c;-webkit-text-stroke:.2px">н</span>
<span class="t" style="left:630.7px;top:549px;font-size:9.9px;color:#1c1c1c;-webkit-text-stroke:.2px">и</span>
<span class="t" style="left:327.1px;top:565px;font-size:9.9px;color:#1c1c1c;-webkit-text-stroke:.2px">и</span>
<span class="t" style="left:630.7px;top:565px;font-size:9.9px;color:#1c1c1c;-webkit-text-stroke:.2px">к</span>
<span class="t" style="left:327.6px;top:581px;font-size:9.9px;color:#1c1c1c;-webkit-text-stroke:.2px">т</span>
<span class="t" style="left:630.7px;top:581px;font-size:9.9px;color:#1c1c1c;-webkit-text-stroke:.2px">и</span>
<span class="t" style="left:327.3px;top:597px;font-size:9.9px;color:#1c1c1c;-webkit-text-stroke:.2px">о</span>
<span class="t" style="left:377.7px;top:597px;font-size:9.9px;color:#1c1c1c;-webkit-text-stroke:.2px">м</span>
<span class="t" style="left:276.5px;top:613px;font-size:9.9px;color:#1c1c1c;-webkit-text-stroke:.2px">п</span>
<span class="t" style="left:327.3px;top:613px;font-size:9.9px;color:#1c1c1c;-webkit-text-stroke:.2px">р</span>
<span class="t" style="left:377.7px;top:613px;font-size:9.9px;color:#1c1c1c;-webkit-text-stroke:.2px">и</span>
<span class="t" style="left:428.3px;top:613px;font-size:9.9px;color:#1c1c1c;-webkit-text-stroke:.2px">н</span>
<span class="t" style="left:479.4px;top:613px;font-size:9.9px;color:#1c1c1c;-webkit-text-stroke:.2px">т</span>
<span class="t" style="left:529.7px;top:613px;font-size:9.9px;color:#1c1c1c;-webkit-text-stroke:.2px">е</span>
<span class="t" style="left:580.3px;top:613px;font-size:9.9px;color:#1c1c1c;-webkit-text-stroke:.2px">р</span>
<span class="t" style="left:377.7px;top:629px;font-size:9.9px;color:#1c1c1c;-webkit-text-stroke:.2px">к</span>
<span class="t" style="left:377.9px;top:644px;font-size:9.9px;color:#1c1c1c;-webkit-text-stroke:.2px">р</span></div>
</body></html>
